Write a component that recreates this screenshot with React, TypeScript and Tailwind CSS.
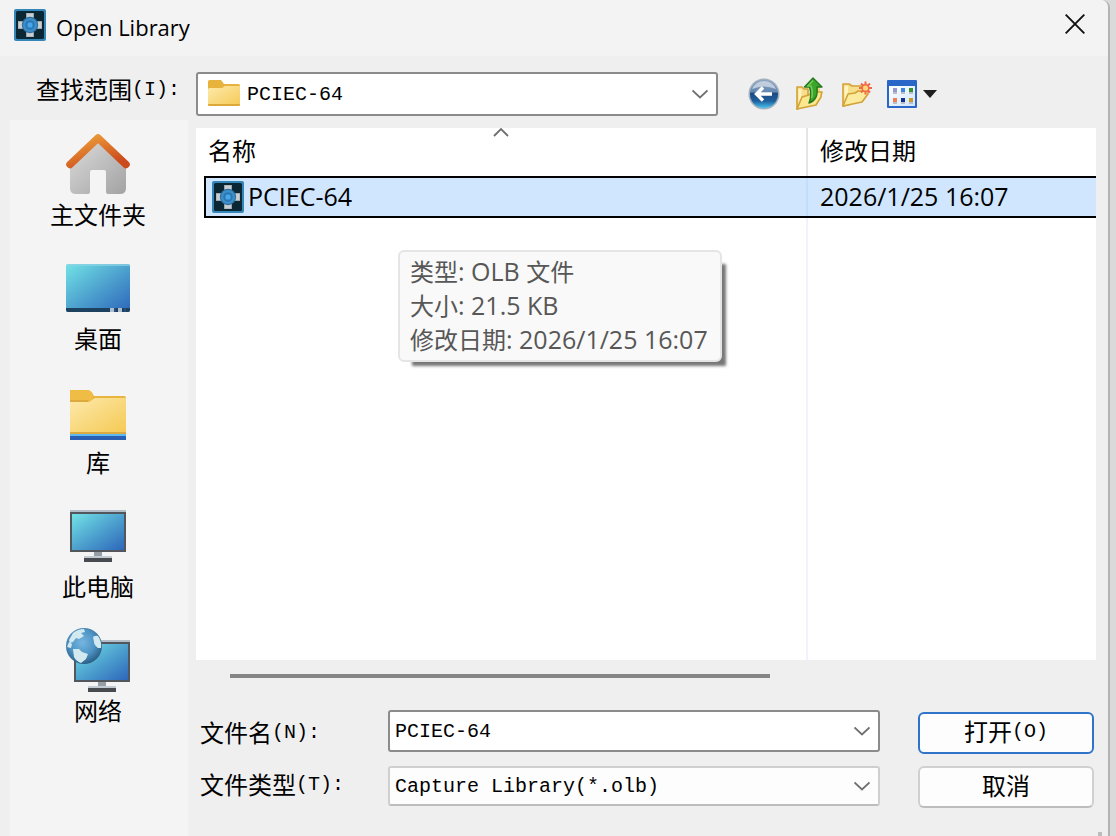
import React, { useState } from "react";

const uiFont = "font-['Open_Sans','Noto_Sans_CJK_SC',sans-serif]";
const monoFont = "font-['Liberation_Mono','Noto_Sans_CJK_SC',monospace]";

function AppIcon() {
  return (
    <svg viewBox="0 0 32 32" className="size-8 shrink-0" aria-hidden="true">
      <rect width="32" height="32" rx="2" fill="#3486b8" />
      <rect x="2" y="2" width="28" height="28" rx="1.500" fill="#0c2734" />
      <path d="M12 4h8v7h-8zM12 21h8v7h-8zM4 12h7v8H4zM21 12h7v8h-7z" fill="#9aa5ac" />
      <path d="M13 4.500h6V9h-6zM13 23h6v4.500h-6zM4.500 13H9v6H4.500zM23 13h4.500v6H23z" fill="#c9ced2" />
      <circle cx="16" cy="16" r="8.200" fill="#2e6f9f" />
      <circle cx="16" cy="16" r="7" fill="#3f90c9" />
      <circle cx="16" cy="16" r="4.800" fill="#2878b6" />
      <rect x="13.5" y="13.5" width="5" height="5" rx="1.500" fill="#4aa6e8" />
    </svg>
  );
}

function FolderSmall() {
  return (
    <svg viewBox="0 0 32 26" className="h-[26px] w-8 shrink-0" aria-hidden="true">
      <defs>
        <linearGradient id="fs" x1="0" y1="0" x2="1" y2="1">
          <stop offset="0" stopColor="#fdeaab" />
          <stop offset="1" stopColor="#f6c956" />
        </linearGradient>
      </defs>
      <path d="M0 1.500Q0 0 1.500 0H13l3 4h14.500Q32 4 32 5.500V20H0z" fill="#e8b33c" />
      <path d="M0 9.500Q0 8 1.500 8H14l3-2h15v18.500Q32 26 30.500 26h-29Q0 26 0 24.500z" fill="url(#fs)" />
      <path d="M0 24h32v.5q0 1.500-1.500 1.500h-29Q0 26 0 24.500z" fill="#dca83a" />
    </svg>
  );
}

function HomeIcon() {
  return (
    <svg viewBox="0 0 64 64" className="size-16" aria-hidden="true">
      <defs>
        <linearGradient id="wall" x1="0" y1="0" x2="1" y2="1">
          <stop offset="0" stopColor="#dcdcdc" />
          <stop offset="1" stopColor="#a2a2a2" />
        </linearGradient>
        <linearGradient id="roof" x1="0" y1="0" x2="0.700" y2="1">
          <stop offset="0" stopColor="#efa43c" />
          <stop offset="1" stopColor="#cb4a1c" />
        </linearGradient>
      </defs>
      <path d="M32 9 60 34V56q0 6-6 6H42q-2 0-2-2V40q0-2-2-2H26q-2 0-2 2V60q0 2-2 2H10q-6 0-6-6V34z" fill="url(#wall)" />
      <path d="M4 32.500 32 6l28 26.500" fill="none" stroke="url(#roof)" strokeWidth="7.500" strokeLinecap="round" strokeLinejoin="round" />
    </svg>
  );
}

function ScreenGradient({ id }: { id: string }) {
  return (
    <linearGradient id={id} x1="0" y1="0" x2="1" y2="1">
      <stop offset="0" stopColor="#72e3e6" />
      <stop offset="0.500" stopColor="#4ea3cf" />
      <stop offset="1" stopColor="#2d66ba" />
    </linearGradient>
  );
}

function DesktopIcon() {
  return (
    <svg viewBox="0 0 64 64" className="size-16" aria-hidden="true">
      <defs><ScreenGradient id="desk" /></defs>
      <rect y="8" width="64" height="48" rx="2" fill="url(#desk)" />
      <path d="M2 8h60q2 0 2 2H0q0-2 2-2z" fill="#8fd3e4" opacity=".7" />
      <path d="M0 52h64v2q0 2-2 2H2q-2 0-2-2z" fill="#1c425f" />
      <path d="M44 52h4v4h-4zM52 52h4v4h-4z" fill="#aebfd3" />
      <path d="M48 52h2v4h-2zM58 52h2v4h-2z" fill="#2b4c75" />
    </svg>
  );
}

function LibraryIcon() {
  return (
    <svg viewBox="0 0 64 64" className="size-16" aria-hidden="true">
      <defs>
        <linearGradient id="lib" x1="0" y1="0" x2="1" y2="1">
          <stop offset="0" stopColor="#fde9ab" />
          <stop offset="1" stopColor="#f5ca55" />
        </linearGradient>
      </defs>
      <path d="M4 10h18q3 0 6 6h30q2 0 2 2v10H4z" fill="#e9b53f" />
      <path d="M4 10h18q5 2 5 6t-5 6H4z" fill="#efbd45" />
      <path d="M4 20h18v2H4z" fill="#dba93c" />
      <path d="M4 22h19l6-4h31v34H4z" fill="url(#lib)" />
      <path d="M4 52h56v2H4z" fill="#dcaa42" />
      <path d="M4 54h56v3H4z" fill="#5eb9ee" />
      <path d="M4 56h56v4H4z" fill="#2a60b4" />
    </svg>
  );
}

function ComputerIcon() {
  return (
    <svg viewBox="0 0 64 64" className="size-16" aria-hidden="true">
      <defs><ScreenGradient id="pc" /></defs>
      <path d="M4 6h56v3H4z" fill="#b4bec8" />
      <path d="M4 8h56v40H4z" fill="#52575d" />
      <path d="M6 10h52v36H6z" fill="url(#pc)" />
      <path d="M28 48h8v5h-8z" fill="#969fa6" />
      <path d="M18 52h28v2H18z" fill="#c3cbd2" />
      <path d="M18 54h28v4H18z" fill="#474b50" />
    </svg>
  );
}

function NetworkIcon() {
  return (
    <svg viewBox="0 0 64 64" className="size-16" aria-hidden="true">
      <defs>
        <ScreenGradient id="net" />
        <radialGradient id="globe" cx="0.450" cy="0.400" r="0.600">
          <stop offset="0" stopColor="#76b5e0" />
          <stop offset="0.600" stopColor="#4d93c4" />
          <stop offset="1" stopColor="#2c5f86" />
        </radialGradient>
      </defs>
      <path d="M8 12h56v3H8z" fill="#b4bec8" />
      <path d="M8 14h56v40H8z" fill="#52575d" />
      <path d="M10 16h52v36H10z" fill="url(#net)" />
      <path d="M32 54h8v5h-8z" fill="#969fa6" />
      <path d="M22 58h28v2H22z" fill="#c3cbd2" />
      <path d="M22 60h28v4H22z" fill="#474b50" />
      <circle cx="18" cy="18" r="18" fill="url(#globe)" />
      <path d="M7 5q5-4 11-4l1 3-4 1 3 3-5 3-3-1-3 4-3 1-1-3zM3 14l3 2-1 4-4-1zM27 9q3-2 5-1 4 6 3 12l-3 0q-4-3-4-6zM7 21l6 0 3 3 6 2-2 5-5 4q-5-2-7-6z" fill="#d3e9f0" />
    </svg>
  );
}

function BackIcon() {
  return (
    <svg viewBox="0 0 32 32" className="size-8" aria-hidden="true">
      <defs>
        <linearGradient id="back" x1="0" y1="0" x2="0" y2="1">
          <stop offset="0" stopColor="#8aa5c2" />
          <stop offset="0.420" stopColor="#6488b0" />
          <stop offset="0.480" stopColor="#1d4b80" />
          <stop offset="0.750" stopColor="#205f9c" />
          <stop offset="1" stopColor="#45c3f0" />
        </linearGradient>
      </defs>
      <circle cx="16" cy="16" r="15.500" fill="#a3b0be" />
      <circle cx="16" cy="16" r="14" fill="url(#back)" />
      <path d="M4 11Q8 3 16 3t12 8q-12-5-24 0z" fill="#cfdae6" opacity=".8" />
      <path d="M15 9.500 8.500 16l6.500 6.500M9 16h15" fill="none" stroke="#fff" strokeWidth="3.400" />
    </svg>
  );
}

function UpIcon() {
  return (
    <svg viewBox="0 0 30 34" className="h-[34px] w-[30px]" aria-hidden="true">
      <path d="M2 10h5l2 2h4v14L2 32z" fill="#f8df8e" stroke="#d2a236" strokeWidth="1.600" strokeLinejoin="round" />
      <path d="M3.500 12h3v10l-3 6z" fill="#fff3c0" />
      <path d="M20 10h5v6h-5z" fill="#f4d47a" />
      <path d="M2 32 7 20l7-2 3-3h10q-1 3-1 5l-5 8z" fill="#fbe790" stroke="#d2a236" strokeWidth="1.600" strokeLinejoin="round" />
      <path d="M18 1 9.500 10h5c2 6 2 10-.5 16 6-2 9-8 8-16h5z" fill="#3ba62b" stroke="#23781b" strokeWidth="1.400" strokeLinejoin="round" />
      <path d="M18 3.500l-5 5.500h3c1.500 4 1.800 8 .5 12" fill="none" stroke="#73cc58" strokeWidth="1.600" />
    </svg>
  );
}

function NewFolderIcon() {
  return (
    <svg viewBox="0 0 32 28" className="h-7 w-8" aria-hidden="true">
      <path d="M3 4h6l3 2h12v8L8 25l-5 1z" fill="#f8df8e" stroke="#d2a236" strokeWidth="1.600" strokeLinejoin="round" />
      <path d="M4.500 6H8v9l-3.500 6z" fill="#fff3c0" />
      <path d="M3 26 8 14l7-1 3-2h10v3l-6 8z" fill="#fdeb9d" stroke="#d2a236" strokeWidth="1.600" strokeLinejoin="round" />
      <path d="M25.500 1.500v13M19 8h13M21 3.500l9 9M30 3.500l-9 9" stroke="#f0674a" strokeWidth="2" />
      <circle cx="25.500" cy="8" r="3.300" fill="#ffd878" stroke="#f26a45" strokeWidth="1.400" />
    </svg>
  );
}

function ViewIcon() {
  return (
    <svg viewBox="0 0 50 28" className="h-7 w-[50px]" aria-hidden="true">
      <defs>
        <linearGradient id="view" x1="0" y1="0" x2="1" y2="1">
          <stop offset="0" stopColor="#ffffff" />
          <stop offset="1" stopColor="#cfe5fb" />
        </linearGradient>
      </defs>
      <rect width="30" height="28" rx="1" fill="#2a66c8" />
      <path d="M2 6h26v20H2z" fill="url(#view)" />
      <path d="M6 8h4v4H6z" fill="#9a97cf" />
      <path d="M14 8h4v4h-4z" fill="#3e86dc" />
      <path d="M22 8h4v4h-4z" fill="#3b8f2e" />
      <path d="M6 18h4v4H6z" fill="#f07e52" />
      <path d="M14 18h4v4h-4z" fill="#12308f" />
      <path d="M22 18h4v4h-4z" fill="#c69b2c" />
      <path d="M6 12h4v2H6zM14 12h4v2h-4zM22 12h4v2h-4zM6 22h4v2H6zM14 22h4v2h-4zM22 22h4v2h-4z" fill="#b9bec8" />
      <path d="M36 10h14l-7 8z" fill="#1f1f1f" />
    </svg>
  );
}

function Chevron() {
  return (
    <svg viewBox="0 0 16 10" className="pointer-events-none absolute top-1/2 right-[10px] h-[10px] w-4 -translate-y-1/2" aria-hidden="true">
      <path d="M.5 1.500 8 8.500l7.500-7" fill="none" stroke="#707070" strokeWidth="1.800" />
    </svg>
  );
}

const places = [
  { name: "主文件夹", Icon: HomeIcon },
  { name: "桌面", Icon: DesktopIcon },
  { name: "库", Icon: LibraryIcon },
  { name: "此电脑", Icon: ComputerIcon },
  { name: "网络", Icon: NetworkIcon },
];

export default function App() {
  const [fileName, setFileName] = useState("PCIEC-64");

  return (
    <div className={`min-h-screen bg-[#dadada] pr-[6px] text-2xl text-black ${uiFont}`}>
      <div className="flex min-h-screen flex-col rounded-tr-lg border-r-2 border-[#b3b3b3] bg-[#efefef]">
        <header className="flex h-14 items-start justify-between rounded-tr-lg bg-[#f3f3f3] pr-5 pl-[14px]">
          <div className="flex items-start gap-[10px] pt-[9px]">
            <AppIcon />
            <h1 className="text-[22px] leading-9">Open Library</h1>
          </div>
          <button aria-label="关闭" className="mt-[11px] p-[3px]">
            <svg viewBox="0 0 20 20" className="size-5" aria-hidden="true">
              <path d="M.7.700l18.600 18.600M19.300.7.700 19.300" stroke="#111" strokeWidth="1.900" />
            </svg>
          </button>
        </header>

        <div className="flex h-16 items-start pt-4">
          <label htmlFor="look-in" className="flex w-[196px] items-center pl-9 leading-9">
            查找范围<span className={`text-xl ${monoFont}`}>(I):</span>
          </label>
          <div className="relative w-[522px]">
            <span className="pointer-events-none absolute top-2 left-3"><FolderSmall /></span>
            <select id="look-in" className={`h-11 w-full appearance-none rounded-[3px] border-2 border-[#8b8b8b] bg-white pt-[2px] pl-[49px] text-xl ${monoFont}`}>
              <option>PCIEC-64</option>
            </select>
            <Chevron />
          </div>
          <div className="flex h-11 items-center gap-[15px] pl-[30px]">
            <button aria-label="返回"><BackIcon /></button>
            <button aria-label="向上一级"><UpIcon /></button>
            <button aria-label="新建文件夹"><NewFolderIcon /></button>
            <button aria-label="查看菜单"><ViewIcon /></button>
          </div>
        </div>

        <div className="flex flex-1 gap-2 pl-[10px]">
          <nav className="w-[178px] shrink-0 bg-[#f4f4f4] pt-3">
            {places.map(({ name, Icon }) => (
              <button key={name} className="flex h-[124px] w-full flex-col items-center pr-[2px]">
                <Icon />
                <span className="leading-[38px]">{name}</span>
              </button>
            ))}
          </nav>

          <main className="flex min-w-0 flex-1 flex-col pt-2">
            <div className="relative mr-3 h-[532px] bg-white">
              <table className="h-full w-full table-fixed border-separate border-spacing-0 text-left">
                <colgroup>
                  <col className="w-[612px]" />
                  <col />
                </colgroup>
                <thead>
                  <tr className="h-12">
                    <th className="relative border-r-2 border-[#e5e5e5] p-0 pb-[2px] pl-3 font-normal">
                      名称
                      <svg viewBox="0 0 16 9" className="absolute top-0 left-1/2 h-[9px] w-4 -translate-x-1/2" aria-hidden="true">
                        <path d="M1 8l7-7 7 7" fill="none" stroke="#707070" strokeWidth="1.800" />
                      </svg>
                    </th>
                    <th className="p-0 pb-[2px] pl-3 font-normal">修改日期</th>
                  </tr>
                </thead>
                <tbody className="text-[25px]">
                  <tr className="h-[42px]">
                    <td className="p-0 pl-2">
                      <div className="flex h-[42px] items-center gap-1 border-y-2 border-l-2 border-black bg-[#d0e6fe] pl-[6px]">
                        <AppIcon />
                        <span>PCIEC-64</span>
                        <span className="ml-auto w-[2px] self-stretch bg-[#c3defc]" />
                      </div>
                    </td>
                    <td className="p-0">
                      <div className="flex h-[42px] items-center border-y-2 border-black bg-[#d0e6fe] pl-3">2026/1/25 16:07</div>
                    </td>
                  </tr>
                  <tr>
                    <td className="border-r-2 border-[#f0f3fd]" />
                    <td />
                  </tr>
                </tbody>
              </table>
              <div role="tooltip" className="absolute top-[122px] left-[202px] w-[324px] rounded-md border-2 border-[#e5e5e5] bg-[#f9f9f9] px-[10px] pt-[2px] pb-1 text-[25px] leading-[34px] whitespace-nowrap text-[#575757] shadow-[9px_9px_3px_-5px_#777777]">
                <p><span className="text-2xl">类型</span>: OLB <span className="text-2xl">文件</span></p>
                <p><span className="text-2xl">大小</span>: 21.5 KB</p>
                <p><span className="text-2xl">修改日期</span>: 2026/1/25 16:07</p>
              </div>
            </div>
            <div className="h-[50px] pt-[14px] pl-[34px]">
              <div className="h-1 w-[540px] bg-[#858585]" />
            </div>

            <form className="flex justify-between pr-[14px] pl-1" onSubmit={(e) => e.preventDefault()}>
              <div className="flex flex-col gap-[14px]">
                <div className="flex items-center">
                  <label htmlFor="file-name" className="flex w-[188px] items-center pt-1">
                    文件名<span className={`text-xl ${monoFont}`}>(N):</span>
                  </label>
                  <div className="relative w-[492px]">
                    <input
                      id="file-name"
                      value={fileName}
                      onChange={(e) => setFileName(e.target.value)}
                      className={`h-[42px] w-full rounded-[3px] border-2 border-[#8b8b8b] bg-white pl-[5px] text-xl ${monoFont}`}
                    />
                    <Chevron />
                  </div>
                </div>
                <div className="flex items-center">
                  <label htmlFor="file-type" className="flex w-[188px] items-center pb-[2px]">
                    文件类型<span className={`text-xl ${monoFont}`}>(T):</span>
                  </label>
                  <div className="relative w-[492px]">
                    <select id="file-type" className={`h-10 w-full appearance-none rounded-[3px] border-2 border-[#cfcfcf] border-b-[#bdbdbd] bg-[#fdfdfd] pt-[2px] pl-[5px] text-xl ${monoFont}`}>
                      <option>Capture Library(*.olb)</option>
                    </select>
                    <Chevron />
                  </div>
                </div>
              </div>
              <div className="flex flex-col gap-3 pt-[2px]">
                <button type="submit" className="flex h-[42px] w-44 items-center justify-center rounded-md border-2 border-[#2f74c8] bg-[#fdfdfd] pb-[2px]">
                  打开<span className={`text-xl ${monoFont}`}>(O)</span>
                </button>
                <button type="button" className="flex h-[42px] w-44 items-center justify-center rounded-md border-2 border-[#d0d0d0] border-b-[#bdbdbd] bg-[#fdfdfd] pb-[2px]">
                  取消
                </button>
              </div>
            </form>
            <div className="mt-auto flex justify-end pr-[6px]">
              <span className="size-1 bg-[#bcbcbc]" />
            </div>
          </main>
        </div>
      </div>
    </div>
  );
}
